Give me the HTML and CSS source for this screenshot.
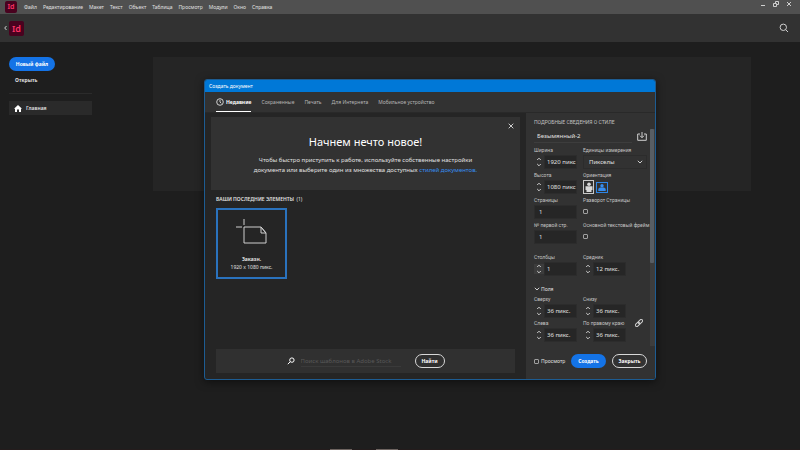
FILE: index.html
```
<!DOCTYPE html>
<html lang="ru">
<head>
  <meta charset="UTF-8" />
  <meta name="viewport" content="width=device-width, initial-scale=1.0"/>
  <title>InDesign</title>
  <link rel="stylesheet" href="styles.css">
</head>
<body>
  <header class="menubar">
    <span class="logo">Id</span>
    <nav class="menu">
      <a href="#">Файл</a>
      <a href="#">Редактирование</a>
      <a href="#">Макет</a>
      <a href="#">Текст</a>
      <a href="#">Объект</a>
      <a href="#">Таблица</a>
      <a href="#">Просмотр</a>
      <a href="#">Модули</a>
      <a href="#">Окно</a>
      <a href="#">Справка</a>
    </nav>
    <div class="window-buttons">
      <button aria-label="Свернуть"><svg width="6" height="6" viewBox="0 0 6 6"><path d="M1 4.500h4"/></svg></button>
      <button aria-label="Восстановить"><svg width="6" height="6" viewBox="0 0 6 6"><path d="M.5 2.500h3v3h-3zM2.500 2.500v-2h3v3h-2"/></svg></button>
      <button aria-label="Закрыть окно"><svg width="6" height="6" viewBox="0 0 6 6"><path d="M1 1l4 4M5 1l-4 4"/></svg></button>
    </div>
  </header>

  <div class="appbar">
    <button class="back" aria-label="Назад"><svg width="3" height="6" viewBox="0 0 3 6"><path d="M2.500 1L.7 3l1.800 2"/></svg></button>
    <span class="logo logo-big">Id</span>
    <button class="search" aria-label="Поиск"><svg width="10" height="10" viewBox="0 0 10 10"><circle cx="4.300" cy="4.300" r="3.200"/><path d="M6.700 6.700L9 9"/></svg></button>
  </div>

  <main class="main">
    <aside class="sidebar">
      <button class="btn btn-blue new-file">Новый файл</button>
      <button class="open-file">Открыть</button>
      <hr>
      <a class="home" href="#">
        <svg width="8" height="7" viewBox="0 0 8 7"><path d="M4 0L0 3.800h1V7h2V4.500h2V7h2V3.800h1z"/></svg>
        Главная
      </a>
    </aside>
    <section class="hero"></section>

    <div class="dialog" role="dialog" aria-labelledby="dialog-title">
      <div class="titlebar" id="dialog-title">Создать документ</div>
      <nav class="tabs">
        <a class="tab active" href="#">
          <svg width="8" height="8" viewBox="0 0 8 8"><circle cx="4" cy="4" r="3.300"/><path d="M4 1.800V4l1.300 1.300"/></svg>
          Недавние
        </a>
        <a class="tab" href="#">Сохраненные</a>
        <a class="tab" href="#">Печать</a>
        <a class="tab" href="#">Для Интернета</a>
        <a class="tab" href="#">Мобильное устройство</a>
      </nav>

      <div class="dialog-body">
        <div class="content">
          <div class="banner">
            <button class="banner-close" aria-label="Закрыть баннер"><svg width="6" height="6" viewBox="0 0 6 6"><path d="M.7.7l4.600 4.600M5.300.7L.7 5.300"/></svg></button>
            <h1>Начнем нечто новое!</h1>
            <p>Чтобы быстро приступить к работе, используйте собственные настройки<br>документа или выберите один из множества доступных <a href="#">стилей документов.</a></p>
          </div>
          <h2 class="recent-title">ВАШИ ПОСЛЕДНИЕ ЭЛЕМЕНТЫ <span>(1)</span></h2>
          <button class="card">
            <svg width="32" height="26" viewBox="0 0 32 26"><path d="M8 0v6M0 8h6M8 8h17l5 6v10H8zM25 8v6h5M25 8l5 6"/></svg>
            <strong>Заказн.</strong>
            <small>1920 x 1080 пикс.</small>
          </button>
          <form class="stock">
            <svg width="8" height="8" viewBox="0 0 8 8"><circle cx="4.900" cy="3.100" r="2.200"/><path d="M3.300 4.700L.8 7.200"/></svg>
            <input type="text" aria-label="Поиск шаблонов" placeholder="Поиск шаблонов в Adobe Stock">
            <button type="button" class="btn btn-outline find">Найти</button>
          </form>
        </div>

        <form class="panel">
          <div class="settings">
            <h2>ПОДРОБНЫЕ СВЕДЕНИЯ О СТИЛЕ</h2>
            <div class="name-row">
              <input type="text" aria-label="Имя" value="Безымянный-2">
              <button type="button" aria-label="Сохранить стиль"><svg width="10" height="9" viewBox="0 0 10 9"><path d="M3 2H.7v6.300h8.600V2H7M5 0v5.500M3 3.700l2 2 2-2"/></svg></button>
            </div>

            <div class="fields">
              <div class="field">
                <label for="width">Ширина</label>
                <div class="stepper"><svg class="arrows"><use href="#arrows"/></svg><input id="width" type="text" value="1920 пикс"></div>
              </div>
              <div class="field">
                <label for="units">Единицы измерения</label>
                <div class="select-wrap">
                  <select id="units"><option>Пикселы</option></select>
                  <svg width="6" height="4" viewBox="0 0 6 4"><path d="M.8.8L3 3 5.200.8"/></svg>
                </div>
              </div>
              <div class="field">
                <label for="height">Высота</label>
                <div class="stepper"><svg class="arrows"><use href="#arrows"/></svg><input id="height" type="text" value="1080 пикс"></div>
              </div>
              <div class="field">
                <span class="label">Ориентация</span>
                <div class="orientation">
                  <button type="button" class="portrait" aria-label="Книжная"><svg width="8" height="10" viewBox="0 0 8 10"><circle cx="4" cy="2.200" r="1.800"/><path d="M.5 4.200h7V8H6.500v2h-5V8h-1z"/></svg></button>
                  <button type="button" class="landscape" aria-label="Альбомная"><svg width="8" height="7" viewBox="0 0 8 7"><circle cx="4" cy="1.800" r="1.700"/><path d="M.3 7V4.800l1.700-1.300h4l1.700 1.300V7z"/></svg></button>
                </div>
              </div>
              <div class="field">
                <label for="pages">Страницы</label>
                <input id="pages" type="text" value="1">
              </div>
              <div class="field">
                <label for="facing">Разворот Страницы</label>
                <input id="facing" type="checkbox">
              </div>
              <div class="field">
                <label for="start">№ первой стр.</label>
                <input id="start" type="text" value="1">
              </div>
              <div class="field">
                <label for="frame">Основной текстовый фрейм</label>
                <input id="frame" type="checkbox">
              </div>
            </div>

            <div class="fields columns">
              <div class="field">
                <label for="cols">Столбцы</label>
                <div class="stepper"><svg class="arrows boxed"><use href="#arrows"/></svg><input id="cols" type="text" value="1"></div>
              </div>
              <div class="field">
                <label for="gutter">Средник</label>
                <div class="stepper"><svg class="arrows"><use href="#arrows"/></svg><input id="gutter" type="text" value="12 пикс."></div>
              </div>
            </div>

            <button type="button" class="section-toggle"><svg width="6" height="4" viewBox="0 0 6 4"><path d="M.8.8L3 3 5.200.8"/></svg>Поля</button>
            <div class="margins">
              <div class="fields">
                <div class="field">
                  <label for="top">Сверху</label>
                  <div class="stepper"><svg class="arrows"><use href="#arrows"/></svg><input id="top" type="text" value="36 пикс."></div>
                </div>
                <div class="field">
                  <label for="bottom">Снизу</label>
                  <div class="stepper"><svg class="arrows"><use href="#arrows"/></svg><input id="bottom" type="text" value="36 пикс."></div>
                </div>
                <div class="field">
                  <label for="left">Слева</label>
                  <div class="stepper"><svg class="arrows"><use href="#arrows"/></svg><input id="left" type="text" value="36 пикс."></div>
                </div>
                <div class="field">
                  <label for="right">По правому краю</label>
                  <div class="stepper"><svg class="arrows"><use href="#arrows"/></svg><input id="right" type="text" value="36 пикс."></div>
                </div>
              </div>
              <button type="button" class="link" aria-label="Связать поля"><svg width="8" height="8" viewBox="0 0 8 8"><g transform="rotate(-45 4 4)"><rect x="-.5" y="2.600" width="5" height="2.800" rx="1.400"/><rect x="3.500" y="2.600" width="5" height="2.800" rx="1.400"/></g></svg></button>
            </div>
          </div>
          <div class="scrollbar"><div class="thumb"></div></div>

          <div class="actions">
            <label class="preview"><input type="checkbox">Просмотр</label>
            <button type="button" class="btn btn-blue">Создать</button>
            <button type="button" class="btn btn-outline">Закрыть</button>
          </div>
        </form>
      </div>
    </div>
  </main>

  <footer class="taskbar"><span></span><span></span></footer>

  <svg class="defs">
    <symbol id="arrows" viewBox="0 0 6 10"><path d="M1.200 3L3 1.200 4.800 3M1.200 7L3 8.800 4.800 7"/></symbol>
  </svg>
</body>
</html>
```
FILE: styles.css
```
* {
  box-sizing: border-box;
}

body {
  margin: 0;
  min-height: 100vh;
  display: flex;
  flex-direction: column;
  background: #1e1e1e;
  color: #e0e0e0;
  font-family: 'Noto Sans', 'Open Sans', sans-serif;
  font-size: 5px;
  line-height: 8px;
}

button, input, select {
  font: inherit;
  color: inherit;
  background: none;
  border: 0;
  padding: 0;
  margin: 0;
}

a {
  color: inherit;
  text-decoration: none;
}

svg {
  display: block;
  flex: none;
  fill: none;
  stroke: #cfcfcf;
}

.defs {
  width: 0;
  height: 0;
  position: absolute;
}

h1, h2, p {
  margin: 0;
  font-weight: normal;
}

h2 {
  font-size: 5px;
}

/* top bars */
.menubar {
  height: 14px;
  background: #505050;
  display: flex;
  align-items: center;
  padding: 0 8px 0 5px;
}

.logo {
  width: 12px;
  height: 12px;
  border-radius: 2px;
  background: #49021f;
  color: #ff3366;
  font-size: 7px;
  font-weight: 600;
  line-height: 12px;
  text-align: center;
}

.logo-big {
  width: 15px;
  height: 15px;
  font-size: 9px;
  line-height: 15px;
}

.menu {
  display: flex;
  gap: 6px;
  margin-left: 7px;
}

.window-buttons {
  display: flex;
  gap: 7px;
  margin-left: auto;
  padding-bottom: 6px;
}

.appbar {
  height: 28px;
  background: #323232;
  display: flex;
  align-items: center;
  padding: 0 11px 0 4px;
}

.back {
  margin-right: 2px;
}

.search {
  margin-left: auto;
}

/* start screen */
.main {
  flex: 1;
  position: relative;
  display: flex;
  align-items: flex-start;
  padding: 15px 49px 0 9px;
}

.sidebar {
  width: 83px;
  margin-right: 61px;
  display: flex;
  flex-direction: column;
  align-items: flex-start;
}

.btn {
  height: 14px;
  border-radius: 7px;
  font-weight: 700;
  color: #fff;
  text-align: center;
}

.btn-blue {
  background: #1473e6;
}

.btn-outline {
  border: 1px solid #d8d8d8;
}

.new-file {
  width: 46px;
}

.open-file {
  font-weight: 700;
  margin: 5px 0 0 6px;
}

.sidebar hr {
  width: 100%;
  margin: 9px 0 7px;
  border: 0;
  border-top: 1px solid #2b2b2b;
}

.home {
  width: 100%;
  height: 14px;
  display: flex;
  align-items: center;
  gap: 4px;
  padding-left: 5px;
  background: #2a2a2a;
  font-weight: 600;
}

.home svg {
  fill: #fff;
  stroke: none;
}

.hero {
  flex: 1;
  height: 134px;
  background: #252525;
}

.taskbar {
  height: 1px;
  display: flex;
  justify-content: center;
  gap: 24px;
  padding-right: 72px;
  background: #241c1c;
}

.taskbar span {
  width: 22px;
  background: #6e6460;
}

/* new document dialog */
.dialog {
  position: absolute;
  top: 37px;
  left: 204px;
  right: 144px;
  background: #252525;
  border: 1px solid #1d5c92;
  border-radius: 3px;
  box-shadow: 0 2px 8px rgba(0, 0, 0, 0.5);
  overflow: hidden;
}

.titlebar {
  height: 12px;
  line-height: 12px;
  padding-left: 4px;
  background: #0078d7;
  color: #fff;
}

.tabs {
  display: flex;
  gap: 10px;
  height: 20px;
  padding-left: 11px;
  background: #323232;
}

.tab {
  display: flex;
  align-items: center;
  gap: 2px;
  color: #b5b5b5;
}

.tab.active {
  color: #fff;
  font-weight: 700;
  border-bottom: 1px solid #fff;
}

.dialog-body {
  display: flex;
  border-top: 1px solid #292929;
}

.content {
  flex: 1;
  min-width: 0;
  display: flex;
  flex-direction: column;
  align-items: flex-start;
  padding: 4px 6px 6px;
}

.banner {
  position: relative;
  width: 100%;
  padding: 16px 0 15px;
  background: #323232;
  text-align: center;
}

.banner h1 {
  color: #fff;
  font-size: 11px;
  line-height: 18px;
}

.banner p {
  margin-top: 4px;
  font-size: 6px;
  line-height: 10px;
}

.banner a {
  color: #378ef0;
}

.banner-close {
  position: absolute;
  top: 6px;
  right: 6px;
}

.recent-title {
  margin: 5px 0 5px 5px;
  font-weight: 600;
}

.recent-title span {
  font-weight: normal;
  margin-left: 1px;
}

.card {
  width: 71px;
  height: 71px;
  margin-left: 5px;
  border: 2px solid #2a72bd;
  display: flex;
  flex-direction: column;
  align-items: center;
  padding-top: 9px;
}

.card strong {
  margin-top: 10px;
}

.card small {
  font-size: 5px;
}

.stock {
  align-self: stretch;
  display: flex;
  align-items: center;
  justify-content: center;
  height: 24px;
  margin: auto 5px 0;
  background: #303030;
}

.stock svg {
  stroke: #fff;
}

.stock input {
  width: 100px;
  height: 12px;
  margin: 0 14px 0 6px;
  border-bottom: 1px solid #3a3a3a;
  font-size: 6px;
}

.stock input::placeholder {
  color: #585858;
}

.find {
  width: 30px;
}

/* settings panel */
.panel {
  width: 129px;
  display: grid;
  grid-template-columns: 1fr 5px;
  background: #323232;
}

.settings {
  min-width: 0;
  padding: 5px 3px 4px 8px;
}

.settings h2 {
  color: #c0c0c0;
  font-family: Roboto, sans-serif;
}

.name-row {
  display: flex;
  justify-content: space-between;
  align-items: center;
  margin: 3px 0 4px;
}

.name-row input {
  width: 98px;
  height: 14px;
  padding-left: 3px;
  border-bottom: 1px solid #3d3d3d;
  font-size: 6px;
}

.fields {
  display: grid;
  grid-template-columns: 43px 1fr;
  gap: 3px 6px;
}

.field {
  display: flex;
  flex-direction: column;
  align-items: flex-start;
  gap: 1px;
  min-width: 0;
}

.field label, .field .label {
  height: 7px;
  line-height: 7px;
  font-family: Roboto, sans-serif;
  white-space: nowrap;
  color: #c4c4c4;
}

.field input[type="text"] {
  width: 100%;
  height: 14px;
  padding-left: 4px;
  background: #262626;
  border: 1px solid #2c2c2c;
  font-size: 6px;
}

.stepper {
  width: 43px;
  display: flex;
  align-items: center;
}

.stepper input[type="text"] {
  padding-left: 2px;
}

.arrows {
  width: 10px;
  height: 10px;
}

.arrows.boxed {
  background: #3c3c3c;
}

.select-wrap {
  width: 100%;
  display: grid;
  align-items: center;
}

.select-wrap select, .select-wrap svg {
  grid-area: 1 / 1;
}

.select-wrap select {
  appearance: none;
  height: 14px;
  padding-left: 5px;
  border: 1px solid #2c2c2c;
  font-size: 6px;
}

.select-wrap svg {
  justify-self: end;
  margin-right: 4px;
  pointer-events: none;
}

.orientation {
  display: flex;
  align-items: center;
  gap: 2px;
}

.orientation button {
  display: flex;
  align-items: center;
  justify-content: center;
  border: 1px solid #c8c8c8;
}

.orientation svg {
  fill: #d8d8d8;
  stroke: none;
}

.portrait {
  width: 11px;
  height: 14px;
}

.orientation .landscape {
  width: 12px;
  height: 11px;
  border-color: #2d86e8;
}

.orientation .landscape svg {
  fill: #378ef0;
}

input[type="checkbox"] {
  appearance: none;
  width: 5px;
  height: 5px;
  border: 1px solid #a0a0a0;
  border-radius: 1px;
}

.field input[type="checkbox"] {
  margin-top: 4px;
}

.columns {
  margin-top: 10px;
}

.section-toggle {
  display: flex;
  align-items: center;
  gap: 1px;
  margin: 9px 0 3px;
}

.margins {
  display: flex;
  align-items: center;
}

.margins .fields {
  flex: 1;
  row-gap: 2px;
}

.link {
  padding: 8px 4px 0 0;
}

.scrollbar {
  margin-top: 16px;
  background: #3d3d3d;
}

.thumb {
  width: 4px;
  height: 134px;
  background: #585e64;
  border-radius: 1px;
}

.actions {
  grid-column: 1 / -1;
  display: flex;
  align-items: center;
  padding: 8px 8px 11px;
}

.preview {
  display: flex;
  align-items: center;
  gap: 2px;
  margin-right: auto;
}

.actions .btn {
  width: 35px;
}

.actions .btn-outline {
  margin-left: 6px;
}
```
